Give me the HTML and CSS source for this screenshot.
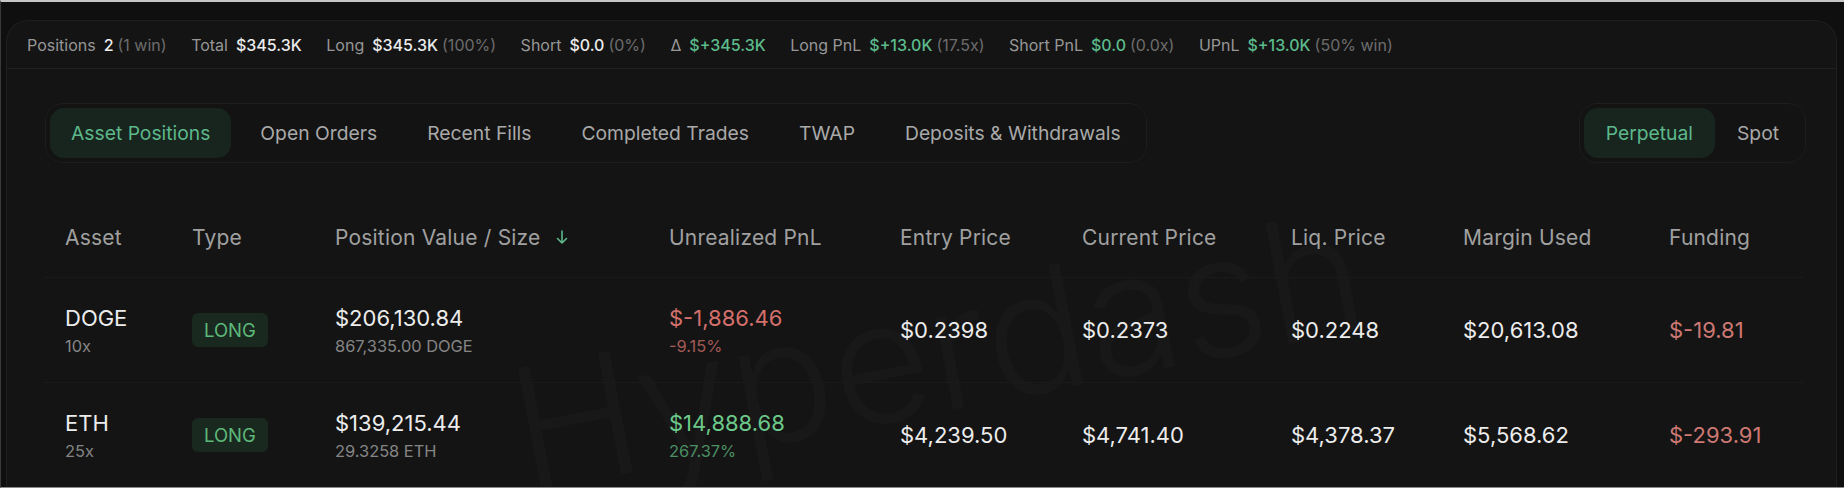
FILE: index.html
```html
<!DOCTYPE html>
<html lang="en">
<head>
    <meta charset="UTF-8">
    <meta name="viewport" content="width=device-width, initial-scale=1.0">
    <title>Positions</title>
    <link rel="stylesheet" href="styles.css">
</head>
<body>
    <div class="frame">
        <div class="panel">
            <div class="summary">
                <span class="stat"><span class="stat-label">Positions</span><span class="stat-value">2</span><span class="stat-note">(1 win)</span></span>
                <span class="stat"><span class="stat-label">Total</span><span class="stat-value">$345.3K</span></span>
                <span class="stat"><span class="stat-label">Long</span><span class="stat-value">$345.3K</span><span class="stat-note">(100%)</span></span>
                <span class="stat"><span class="stat-label">Short</span><span class="stat-value">$0.0</span><span class="stat-note">(0%)</span></span>
                <span class="stat"><span class="stat-label">Δ</span><span class="stat-value up">$+345.3K</span></span>
                <span class="stat"><span class="stat-label">Long PnL</span><span class="stat-value up">$+13.0K</span><span class="stat-note">(17.5x)</span></span>
                <span class="stat"><span class="stat-label">Short PnL</span><span class="stat-value up">$0.0</span><span class="stat-note">(0.0x)</span></span>
                <span class="stat"><span class="stat-label">UPnL</span><span class="stat-value up">$+13.0K</span><span class="stat-note">(50% win)</span></span>
            </div>

            <div class="toolbar">
                <div class="segmented">
                    <div class="seg active">Asset Positions</div>
                    <div class="seg">Open Orders</div>
                    <div class="seg">Recent Fills</div>
                    <div class="seg">Completed Trades</div>
                    <div class="seg">TWAP</div>
                    <div class="seg">Deposits &amp; Withdrawals</div>
                </div>
                <div class="segmented market">
                    <div class="seg active">Perpetual</div>
                    <div class="seg">Spot</div>
                </div>
            </div>

            <div class="positions">
                <div class="watermark">Hyperdash</div>

                <div class="grid head">
                    <div class="cell">Asset</div>
                    <div class="cell">Type</div>
                    <div class="cell sorted">Position Value / Size
                        <svg class="sort-icon" width="14" height="16" viewBox="0 0 14 16" fill="none" stroke="currentColor" stroke-width="1.6" stroke-linecap="round" stroke-linejoin="round">
                            <path d="M7 2v12M2.5 9.5L7 14l4.5-4.5"/>
                        </svg>
                    </div>
                    <div class="cell">Unrealized PnL</div>
                    <div class="cell">Entry Price</div>
                    <div class="cell">Current Price</div>
                    <div class="cell">Liq. Price</div>
                    <div class="cell">Margin Used</div>
                    <div class="cell">Funding</div>
                </div>

                <div class="grid row">
                    <div class="cell"><div class="main">DOGE</div><div class="sub">10x</div></div>
                    <div class="cell"><span class="badge">LONG</span></div>
                    <div class="cell"><div class="main">$206,130.84</div><div class="sub">867,335.00 DOGE</div></div>
                    <div class="cell"><div class="main loss">$-1,886.46</div><div class="sub loss-dim">-9.15%</div></div>
                    <div class="cell main">$0.2398</div>
                    <div class="cell main">$0.2373</div>
                    <div class="cell main">$0.2248</div>
                    <div class="cell main">$20,613.08</div>
                    <div class="cell main funding">$-19.81</div>
                </div>

                <div class="grid row">
                    <div class="cell"><div class="main">ETH</div><div class="sub">25x</div></div>
                    <div class="cell"><span class="badge">LONG</span></div>
                    <div class="cell"><div class="main">$139,215.44</div><div class="sub">29.3258 ETH</div></div>
                    <div class="cell"><div class="main gain">$14,888.68</div><div class="sub gain-dim">267.37%</div></div>
                    <div class="cell main">$4,239.50</div>
                    <div class="cell main">$4,741.40</div>
                    <div class="cell main">$4,378.37</div>
                    <div class="cell main">$5,568.62</div>
                    <div class="cell main funding">$-293.91</div>
                </div>
            </div>
        </div>
    </div>
</body>
</html>
```

FILE: styles.css
```css
html, body {
    margin: 0;
    height: 100%;
    overflow: hidden;
    background: #0f0f0f;
}
body {
    font-family: Inter, "Liberation Sans", sans-serif;
    color: #e6e6e6;
}
.frame {
    height: 100%;
    box-sizing: border-box;
    border-top: 2px solid #c6c6c6;
    border-left: 1px solid #3a3a3a;
    border-bottom: 1px solid #8a8a8a;
    overflow: hidden;
}
.panel {
    margin: 18px 7px 0 5px;
    height: 600px;
    background: #141414;
    border: 1px solid #1f1f1f;
    border-bottom: none;
    border-radius: 22px 22px 0 0;
    overflow: hidden;
}

/* summary strip */
.summary {
    height: 47px;
    display: flex;
    align-items: center;
    gap: 24.5px;
    padding-left: 20px;
    border-bottom: 1px solid #202020;
    font-size: 16px;
    white-space: nowrap;
}
.stat {
    display: flex;
    align-items: baseline;
}
.stat-label {
    color: #979797;
    margin-right: 8px;
}
.stat-value {
    color: #ececec;
    font-weight: 500;
}
.stat-value.up {
    color: #5cbb8c;
}
.stat-note {
    color: #6c6c6c;
    margin-left: 4px;
}

/* tab bars */
.toolbar {
    display: flex;
    justify-content: space-between;
    margin: 34px 30px 0 38px;
}
.segmented {
    display: flex;
    gap: 8px;
    padding: 4px;
    border: 1px solid #1e1e1e;
    border-radius: 18px;
    background: #131313;
}
.segmented.market {
    gap: 0;
}
.seg {
    height: 50px;
    padding: 0 21px;
    display: flex;
    align-items: center;
    border-radius: 14px;
    font-size: 19.3px;
    color: #a9a9a9;
    white-space: nowrap;
}
.market .seg {
    padding: 0 22px;
}
.seg.active {
    background: #17251e;
    color: #5db88b;
}

/* positions table */
.positions {
    position: relative;
    margin: 34px 32px 0 36px;
}
.grid {
    display: grid;
    grid-template-columns: 127px 143px 334px 231px 182px 209px 172px 206px 157px;
    align-items: center;
    position: relative;
}
.cell {
    padding-left: 22px;
    white-space: nowrap;
}
.head {
    height: 80px;
    font-size: 21px;
    letter-spacing: 0.2px;
    color: #a0a0a0;
}
.sorted {
    display: flex;
    align-items: center;
}
.sort-icon {
    margin-left: 14px;
    color: #5db88b;
}
.row {
    height: 104px;
    border-top: 1px solid #1a1a1a;
}
.main {
    font-size: 22px;
    color: #ececec;
}
.sub {
    font-size: 16.4px;
    color: #858585;
    margin-top: 5px;
}
.badge {
    display: inline-block;
    padding: 6px 12px;
    border-radius: 6px;
    background: #1a291f;
    color: #5db97a;
    font-size: 18.5px;
}
.loss {
    color: #d4706b;
}
.loss-dim {
    color: #a25a56;
}
.gain {
    color: #6cc98a;
}
.gain-dim {
    color: #4b8f63;
}
.main.funding {
    color: #cd7873;
}
.watermark {
    position: absolute;
    left: 490px;
    top: 130px;
    font-size: 170px;
    font-weight: 300;
    color: rgba(255, 255, 255, 0.018);
    transform: rotate(-11deg);
    transform-origin: left bottom;
    pointer-events: none;
    white-space: nowrap;
}
```
